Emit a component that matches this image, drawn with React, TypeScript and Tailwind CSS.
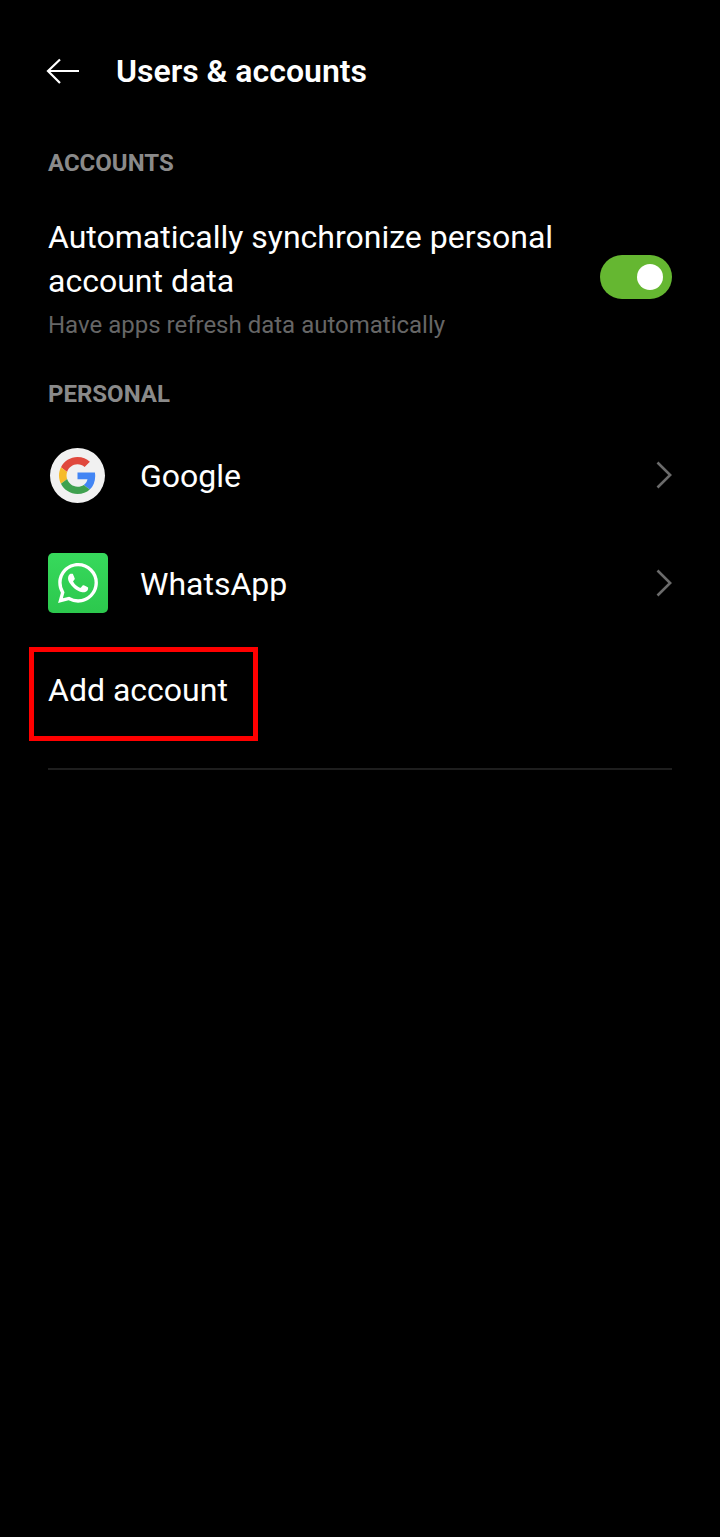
import React from "react";

const Chevron = () => (
  <svg width="16" height="28" viewBox="0 0 16 28" fill="none" stroke="#6b6b6b" strokeWidth="2.6">
    <path d="M1.5 1.5 L14.2 14 L1.5 26.5" />
  </svg>
);

const GoogleIcon = () => (
  <div className="w-[55px] h-[55px] rounded-full bg-[#f1f1f1] flex items-center justify-center">
    <svg width="37" height="37" viewBox="0 0 48 48">
      <path fill="#E0483D" d="M24 9.5c3.54 0 6.71 1.22 9.21 3.6l6.85-6.85C35.9 2.38 30.47 0 24 0 14.62 0 6.51 5.38 2.56 13.22l7.98 6.19C12.43 13.72 17.74 9.5 24 9.5z" />
      <path fill="#4285F4" d="M46.98 24.55c0-1.57-.15-3.09-.38-4.55H24v9.02h12.94c-.58 2.96-2.26 5.48-4.78 7.18l7.73 6c4.51-4.18 7.09-10.36 7.09-17.65z" />
      <path fill="#F6BB2A" d="M10.53 28.59c-.48-1.45-.76-2.99-.76-4.59s.27-3.14.76-4.59l-7.98-6.19C.92 16.46 0 20.12 0 24c0 3.88.92 7.54 2.56 10.78l7.97-6.19z" />
      <path fill="#3FA14F" d="M24 48c6.48 0 11.93-2.13 15.89-5.81l-7.73-6c-2.15 1.45-4.92 2.3-8.16 2.3-6.26 0-11.57-4.22-13.47-9.91l-7.98 6.19C6.51 42.62 14.62 48 24 48z" />
    </svg>
  </div>
);

const WhatsAppIcon = () => (
  <div className="w-[60px] h-[60px] rounded-[5px] bg-gradient-to-b from-[#37d95c] to-[#2cc84d] flex items-center justify-center">
    <svg width="40" height="40" viewBox="0 0 24 24" fill="#ffffff">
      <path d="M17.472 14.382c-.297-.149-1.758-.867-2.03-.967-.273-.099-.471-.148-.67.15-.197.297-.767.966-.94 1.164-.173.199-.347.223-.644.075-.297-.15-1.255-.463-2.39-1.475-.883-.788-1.48-1.761-1.653-2.059-.173-.297-.018-.458.13-.606.134-.133.298-.347.446-.52.149-.174.198-.298.298-.497.099-.198.05-.371-.025-.52-.075-.149-.669-1.612-.916-2.207-.242-.579-.487-.5-.669-.51-.173-.008-.371-.01-.57-.01-.198 0-.52.074-.792.372-.272.297-1.04 1.016-1.04 2.479 0 1.462 1.065 2.875 1.213 3.074.149.198 2.096 3.2 5.077 4.487.709.306 1.262.489 1.694.625.712.227 1.36.195 1.871.118.571-.085 1.758-.719 2.006-1.413.248-.694.248-1.289.173-1.413-.074-.124-.272-.198-.57-.347m-5.421 7.403h-.004a9.87 9.87 0 01-5.031-1.378l-.361-.214-3.741.982.998-3.648-.235-.374a9.86 9.86 0 01-1.51-5.26c.001-5.45 4.436-9.884 9.888-9.884 2.64 0 5.122 1.03 6.988 2.898a9.825 9.825 0 012.893 6.994c-.003 5.45-4.437 9.884-9.885 9.884m8.413-18.297A11.815 11.815 0 0012.05 0C5.495 0 .16 5.335.157 11.892c0 2.096.547 4.142 1.588 5.945L.057 24l6.305-1.654a11.882 11.882 0 005.683 1.448h.005c6.554 0 11.89-5.335 11.893-11.893a11.821 11.821 0 00-3.48-8.413z" />
    </svg>
  </div>
);

export default function App() {
  return (
    <div className="relative w-[720px] h-[1537px] bg-black text-white font-['Roboto',sans-serif] pt-[46px]">
      <header className="flex items-center h-[50px] pl-[46px]">
        <svg width="34" height="26" viewBox="0 0 34 26" fill="none" stroke="#ffffff" strokeWidth="2.2">
          <path d="M33 13 H2 M14 1.5 L2 13 L14 25" />
        </svg>
        <h1 className="ml-[36px] text-[32px] font-semibold leading-[50px]">Users &amp; accounts</h1>
      </header>

      <h2 className="mt-[52px] px-[48px] text-[24px] leading-[30px] font-bold text-[#8a8a8a]">ACCOUNTS</h2>

      <div className="mt-[37px] pl-[48px] pr-[48px] flex items-center justify-between">
        <div>
          <p className="text-[32px] leading-[44px]">
            Automatically synchronize personal
            <br />
            account data
          </p>
          <p className="text-[24px] leading-[30px] mt-[7px] text-[#666666]">Have apps refresh data automatically</p>
        </div>
        <div className="w-[72px] h-[44px] rounded-full bg-[#65b731] flex items-center justify-end pr-[9px] mb-[1px] shrink-0">
          <div className="w-[26px] h-[26px] rounded-full bg-white" />
        </div>
      </div>

      <h2 className="mt-[39px] px-[48px] text-[24px] leading-[30px] font-bold text-[#8a8a8a]">PERSONAL</h2>

      <div className="mt-[38px] flex items-center h-[56px] pl-[50px] pr-[48px]">
        <GoogleIcon />
        <span className="ml-[35px] pt-[2px] text-[32px] flex-1">Google</span>
        <Chevron />
      </div>

      <div className="mt-[50px] flex items-center h-[60px] pl-[48px] pr-[48px]">
        <WhatsAppIcon />
        <span className="ml-[32px] pt-[2px] text-[32px] flex-1">WhatsApp</span>
        <Chevron />
      </div>

      <div className="mt-[55px] px-[48px] text-[32px] leading-[44px]">Add account</div>

      <div className="mt-[56px] mx-[48px] h-[2px] bg-[#1e1e1e]" />

      <div className="absolute left-[29px] top-[647px] w-[229px] h-[94px] border-[5px] border-[#ff0000]" />
    </div>
  );
}
